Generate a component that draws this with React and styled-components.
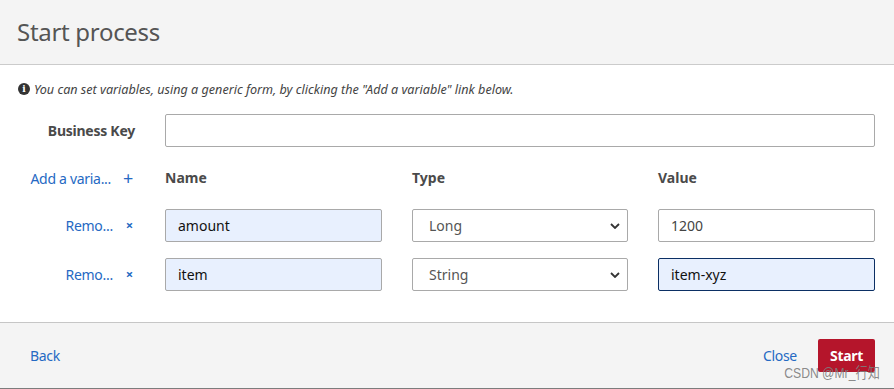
import React from "react";
import styled, { createGlobalStyle } from "styled-components";

const Global = createGlobalStyle`
  html, body { margin: 0; padding: 0; background: #fff; }
  body { font-family: "Noto Sans", "Noto Sans CJK SC", sans-serif; }
  * { box-sizing: border-box; }
`;

const Dialog = styled.div`
  position: relative;
  width: 894px;
  height: 389px;
  display: flex;
  flex-direction: column;
  background: #fff;
  border-bottom: 1px solid #7c7c7c;
`;

const Header = styled.header`
  height: 65px;
  flex: none;
  background: #f4f4f4;
  border-bottom: 1px solid #cbcbcb;
  display: flex;
  align-items: center;
  padding-left: 17px;
`;

const Title = styled.h1`
  margin: 0;
  font-size: 24px;
  font-weight: 400;
  color: #555;
  letter-spacing: -0.3px;
  margin-top: -2px;
`;

const Body = styled.div`
  flex: 1;
  padding: 16px 19px 0 18px;
  display: flex;
  flex-direction: column;
`;

const Info = styled.p`
  margin: 0 0 17px;
  display: flex;
  align-items: center;
  gap: 4px;
  font-size: 12.6px;
  font-style: italic;
  color: #444;
  height: 16px;
`;

const InfoIcon = styled.span`
  width: 12px;
  height: 12px;
  border-radius: 50%;
  background: #333;
  color: #fff;
  font-size: 9px;
  font-weight: 700;
  font-style: normal;
  font-family: "DejaVu Serif", serif;
  display: inline-flex;
  align-items: center;
  justify-content: center;
  line-height: 1;
`;

const Grid = styled.div`
  display: grid;
  grid-template-columns: 117px 217px 216px 217px;
  grid-template-rows: 33px 30px 33px 33px;
  column-gap: 30px;
  row-gap: 16px;
  align-items: center;
`;

const Label = styled.label`
  font-size: 14px;
  font-weight: 700;
  color: #4a4a4a;
  text-align: ${(p) => (p.$right ? "right" : "left")};
  letter-spacing: ${(p) => (p.$right ? "-0.25px" : "0")};
  line-height: 30px;
  align-self: ${(p) => (p.$low ? "end" : "center")};
`;

const Input = styled.input`
  grid-column: ${(p) => p.$span || "auto"};
  height: 33px;
  width: 100%;
  border: 1px solid ${(p) => (p.$focus ? "#0b2f64" : "#a9a9a9")};
  border-radius: 2px;
  background: ${(p) => (p.$fill ? "#e8f0fe" : "#fff")};
  padding: 0 12px;
  font-family: inherit;
  font-size: 14px;
  color: ${(p) => (p.$fill ? "#111" : "#444")};
  outline: none;
`;

const Select = styled.select`
  height: 33px;
  width: 100%;
  border: 1px solid #a9a9a9;
  border-radius: 2px;
  background: #fff
    url("data:image/svg+xml;utf8,<svg xmlns='http://www.w3.org/2000/svg' width='10' height='6' viewBox='0 0 10 6'><path d='M1 1l4 4 4-4' fill='none' stroke='%23333' stroke-width='1.8'/></svg>")
    no-repeat right 7px center;
  appearance: none;
  padding: 0 16px;
  font-family: inherit;
  font-size: 14px;
  color: #555;
  outline: none;
`;

const LinkButton = styled.button`
  justify-self: ${(p) => (p.$end ? "end" : "start")};
  align-self: ${(p) => (p.$low ? "end" : "center")};
  height: 30px;
  background: none;
  border: 0;
  padding: 0;
  display: inline-flex;
  align-items: center;
  gap: ${(p) => p.$gap || "13px"};
  font-family: inherit;
  font-size: 14px;
  letter-spacing: -0.3px;
  color: #2569c3;
  cursor: pointer;
  margin-right: ${(p) => p.$mr || "0"};
`;

const Glyph = styled.span`
  font-size: ${(p) => p.$size || "16px"};
  font-weight: ${(p) => (p.$bold ? 700 : 400)};
  color: #2569c3;
  line-height: 1;
`;

const Footer = styled.footer`
  height: 66px;
  flex: none;
  background: #f4f4f4;
  border-top: 1px solid #c6c6c6;
  display: flex;
  align-items: center;
  justify-content: space-between;
  padding: 0 19px 0 30px;
`;

const Actions = styled.div`
  display: flex;
  align-items: center;
  gap: 21px;
`;

const Primary = styled.button`
  height: 33px;
  padding: 0 12px;
  background: #b5152b;
  color: #fff;
  border: 0;
  border-radius: 2px;
  font-family: inherit;
  font-size: 14px;
  font-weight: 700;
  letter-spacing: -0.3px;
`;

const Watermark = styled.span`
  position: absolute;
  right: 14px;
  bottom: 8px;
  font-size: 14.5px;
  line-height: 1;
  color: rgba(125, 125, 125, 0.9);
  pointer-events: none;
  font-family: "Liberation Sans", "Noto Sans CJK SC", sans-serif;
  transform: scaleX(0.84);
  transform-origin: right center;
  white-space: nowrap;
`;

const rows = [
  { name: "amount", type: "Long", value: "1200" },
  { name: "item", type: "String", value: "item-xyz", focus: true },
];

export default function App() {
  return (
    <>
      <Global />
      <Dialog>
        <Header>
          <Title>Start process</Title>
        </Header>
        <Body>
          <Info>
            <InfoIcon>i</InfoIcon>
            You can set variables, using a generic form, by clicking the "Add a variable" link below.
          </Info>
          <Grid>
            <Label $right>Business Key</Label>
            <Input $span="2 / span 3" />
            <LinkButton $end $low $gap="12px" $mr="2px">
              Add a varia... <Glyph $size="18px">+</Glyph>
            </LinkButton>
            <Label $low>Name</Label>
            <Label $low>Type</Label>
            <Label $low>Value</Label>
            {rows.map((r) => (
              <React.Fragment key={r.name}>
                <LinkButton $end $mr="2px">
                  Remo... <Glyph $size="13px" $bold>×</Glyph>
                </LinkButton>
                <Input $fill defaultValue={r.name} />
                <Select defaultValue={r.type}>
                  <option>Boolean</option>
                  <option>Long</option>
                  <option>String</option>
                </Select>
                <Input $fill={r.focus} $focus={r.focus} defaultValue={r.value} />
              </React.Fragment>
            ))}
          </Grid>
        </Body>
        <Footer>
          <LinkButton>Back</LinkButton>
          <Actions>
            <LinkButton>Close</LinkButton>
            <Primary>Start</Primary>
          </Actions>
        </Footer>
        <Watermark>CSDN @Mr_行知</Watermark>
      </Dialog>
    </>
  );
}
